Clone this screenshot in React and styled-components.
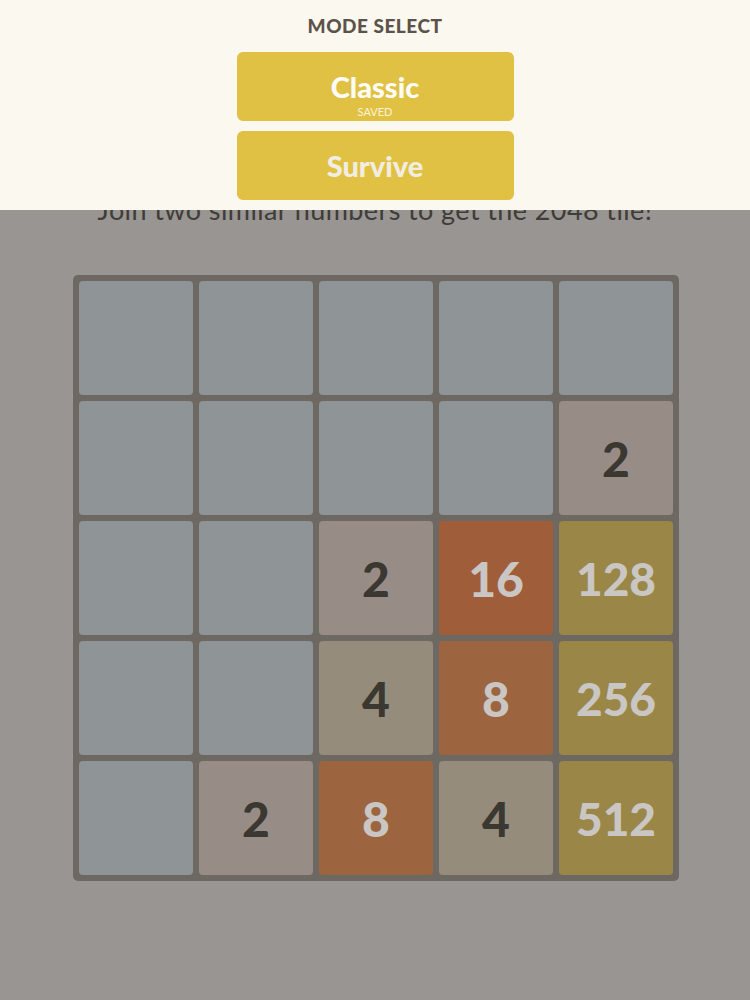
import React from "react";
import styled, { createGlobalStyle } from "styled-components";

const board = [
  [0, 0, 0, 0, 0],
  [0, 0, 0, 0, 2],
  [0, 0, 2, 16, 128],
  [0, 0, 4, 8, 256],
  [0, 2, 8, 4, 512],
];

const tileColors = {
  0: { bg: "#8f9496", fg: "transparent" },
  2: { bg: "#978d86", fg: "#3b3832" },
  4: { bg: "#968c7b", fg: "#3b3832" },
  8: { bg: "#9c6540", fg: "#c9c6c3" },
  16: { bg: "#a05d39", fg: "#c9c6c3" },
  128: { bg: "#9a8747", fg: "#c9c6c3" },
  256: { bg: "#9a8747", fg: "#c9c6c3" },
  512: { bg: "#9a8747", fg: "#c9c6c3" },
};

export default function App() {
  return (
    <>
      <GlobalStyle />
      <Page>
        <Intro>Join two similar numbers to get the 2048 tile!</Intro>
        <Board>
          {board.flat().map((value, i) => (
            <Tile key={i} $value={value}>
              {value || ""}
            </Tile>
          ))}
        </Board>
      </Page>

      <ModePanel>
        <ModeTitle>MODE SELECT</ModeTitle>
        <ModeButton>
          <ModeName>Classic</ModeName>
          <ModeNote>SAVED</ModeNote>
        </ModeButton>
        <ModeButton>
          <ModeName $muted>Survive</ModeName>
        </ModeButton>
      </ModePanel>
    </>
  );
}

const GlobalStyle = createGlobalStyle`
  html, body {
    margin: 0;
    padding: 0;
    background: #989592;
    font-family: Lato, "Open Sans", sans-serif;
  }
`;

const Page = styled.main`
  box-sizing: border-box;
  min-height: 100vh;
  padding-top: 195px;
  display: flex;
  flex-direction: column;
  align-items: center;
  background: #989592;
`;

const Intro = styled.p`
  margin: 0;
  font-size: 27px;
  line-height: 30px;
  color: #403c38;
  letter-spacing: 0.4px;
`;

const Board = styled.div`
  margin-top: 50px;
  margin-left: 2px;
  display: grid;
  grid-template-columns: repeat(5, 114px);
  grid-auto-rows: 114px;
  gap: 6px;
  padding: 6px;
  background: #6d6862;
  border-radius: 5px;
`;

const Tile = styled.div`
  display: flex;
  align-items: center;
  justify-content: center;
  border-radius: 4px;
  font-size: ${(p) => (p.$value >= 100 ? "46px" : "48px")};
  font-weight: 900;
  background: ${(p) => tileColors[p.$value].bg};
  color: ${(p) => tileColors[p.$value].fg};
`;

const ModePanel = styled.section`
  position: fixed;
  top: 0;
  left: 0;
  right: 0;
  height: 210px;
  box-sizing: border-box;
  padding-top: 15px;
  background: #faf8ef;
  display: flex;
  flex-direction: column;
  align-items: center;
`;

const ModeTitle = styled.h2`
  margin: 0 0 15px;
  font-size: 19px;
  line-height: 22px;
  font-weight: 900;
  color: #5c524a;
  letter-spacing: 0.5px;
`;

const ModeButton = styled.button`
  width: 277px;
  height: 70px;
  margin-bottom: 10px;
  padding: 0;
  border: none;
  border-radius: 6px;
  background: #e1c143;
  display: flex;
  flex-direction: column;
  align-items: center;
  justify-content: center;
  font-family: inherit;
  cursor: pointer;
`;

const ModeName = styled.span`
  font-size: 29px;
  line-height: 32px;
  font-weight: 900;
  color: ${(p) => (p.$muted ? "#f1ede2" : "#fdfcf7")};
`;

const ModeNote = styled.span`
  margin-top: 3px;
  margin-bottom: -16px;
  font-size: 11px;
  line-height: 12px;
  color: #fbf4d8;
`;
